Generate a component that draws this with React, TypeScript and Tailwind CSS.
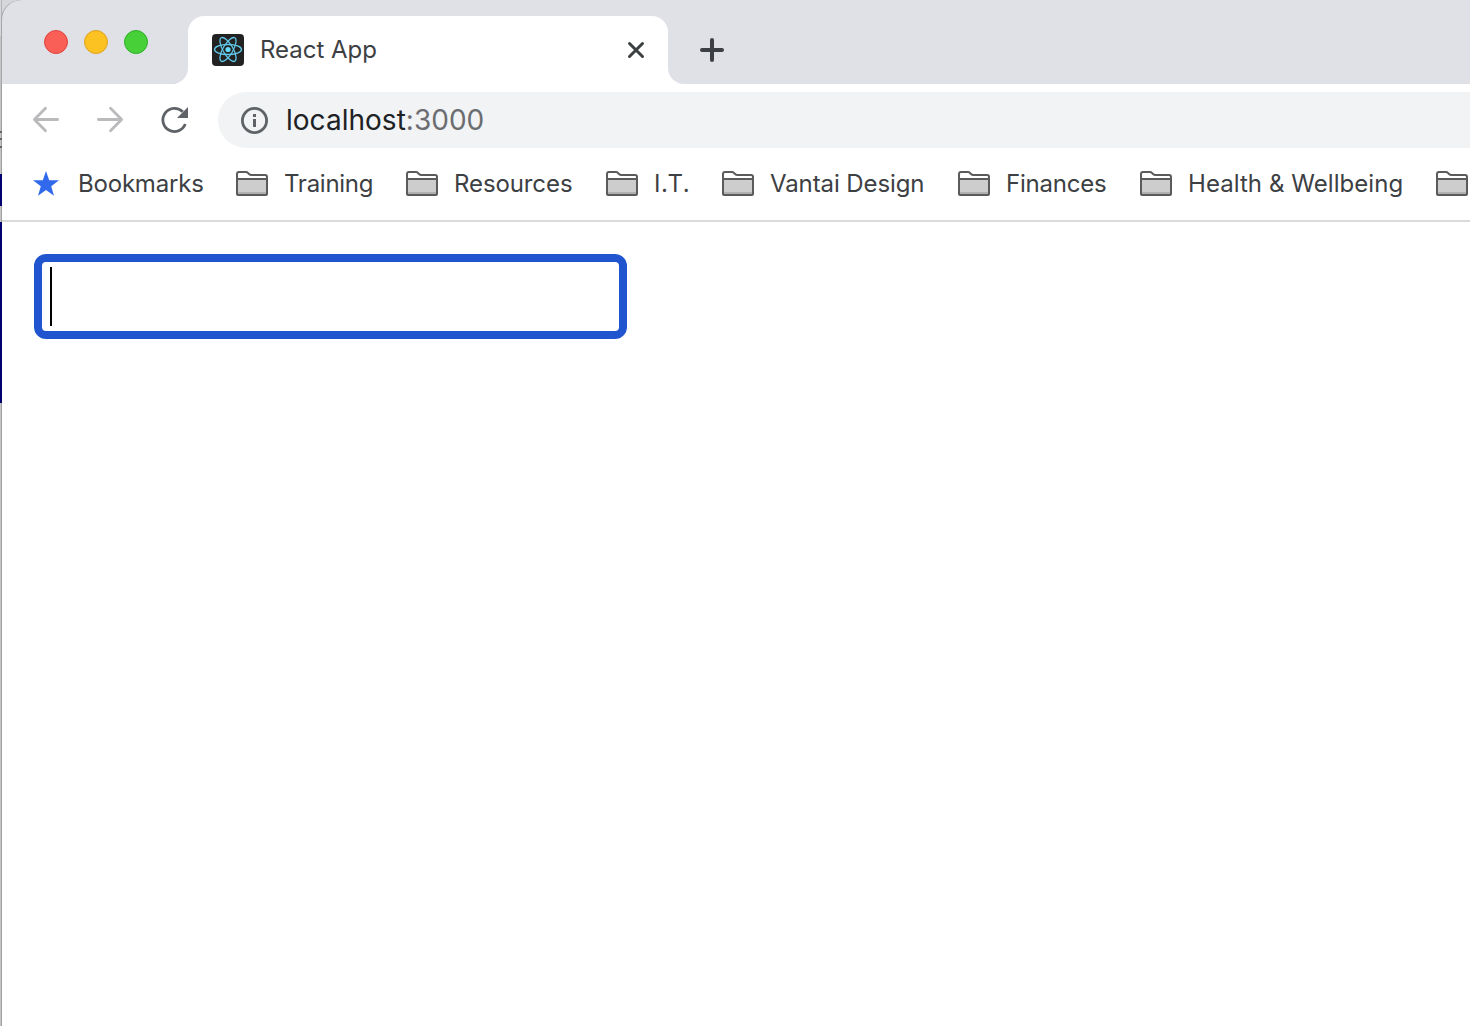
import React from "react";

const folders = [
  { label: "Training", box: "w-[170px]", text: "tracking-[-0.27px]" },
  { label: "Resources", box: "w-[200px]", text: "tracking-[-0.1px]" },
  { label: "I.T.", box: "w-[116px]", text: "tracking-[0.5px]" },
  { label: "Vantai Design", box: "w-[236px]", text: "tracking-[-0.1px]" },
  { label: "Finances", box: "w-[182px]", text: "tracking-[-0.2px]" },
  { label: "Health & Wellbeing", box: "w-[296px]", text: "tracking-[0.06px]" },
  { label: "", box: "w-8", text: "" },
];

function FolderIcon() {
  return (
    <svg width="32" height="26" viewBox="0 0 32 26" className="shrink-0">
      <path d="M1 23V3Q1 1 3 1H10Q11.2 1 12 2L13 3Q14 4 15.5 4H29Q31 4 31 6V23Q31 24 30 24H2Q1 24 1 23Z" fill="#fff" />
      <path d="M2 8H30V23H2Z" fill="#cdcdcd" />
      <path d="M2 21H30V23H2Z" fill="#b0b0b0" />
      <path d="M1 23V3Q1 1 3 1H10Q11.2 1 12 2L13 3Q14 4 15.5 4H29Q31 4 31 6V23Q31 24 30 24H2Q1 24 1 23Z M1 8H31" fill="none" stroke="#5b5b5b" strokeWidth="2" />
    </svg>
  );
}

function ReactLogo() {
  return (
    <svg width="32" height="32" viewBox="0 0 32 32" className="shrink-0">
      <rect width="32" height="32" rx="4" fill="#222" />
      <g fill="none" stroke="#61c9ea" strokeWidth="1.3">
        <ellipse cx="16" cy="15.5" rx="13.5" ry="5" />
        <ellipse cx="16" cy="15.5" rx="13.5" ry="5" transform="rotate(60 16 15.5)" />
        <ellipse cx="16" cy="15.5" rx="13.5" ry="5" transform="rotate(120 16 15.5)" />
      </g>
      <circle cx="16" cy="15.5" r="2.6" fill="#61dafb" />
    </svg>
  );
}

function BackArrow({ className = "" }: { className?: string }) {
  return (
    <svg width="28" height="28" viewBox="0 0 28 28" fill="none" stroke="#bababc" strokeWidth="2.8" strokeLinecap="round" strokeLinejoin="round" className={className}>
      <path d="M25.6 13.5H2.6M13.5 2.3L2.4 13.5L13.5 24.7" />
    </svg>
  );
}

function TabStrip() {
  return (
    <header className="flex h-[84px] bg-white">
      <div className="w-[186px] bg-[linear-gradient(to_right,#d5d7da_50%,#ffffff_50%)]">
        <div className="flex h-[84px] gap-4 rounded-br-[16px] rounded-tl-[20px] bg-[#dfe1e6] pl-[42px] pt-[30px] shadow-[-1px_0_0_#a6a7aa]">
          <span className="size-6 rounded-full border border-[#e0443e] bg-[#f95e57]" />
          <span className="size-6 rounded-full border border-[#dea123] bg-[#fbc222]" />
          <span className="size-6 rounded-full border border-[#2dae29] bg-[#48d038]" />
        </div>
      </div>
      <div className="w-[480px] bg-[#dfe1e6] pt-4">
        <div className="flex h-[68px] items-center rounded-t-[16px] bg-white pl-6 pr-[22px]">
          <ReactLogo />
          <span className="ml-4 text-[24px] leading-8 tracking-[-0.02px] text-[#3c4043]">React App</span>
          <svg width="20" height="20" viewBox="0 0 20 20" className="ml-auto" stroke="#3c4043" strokeWidth="3" strokeLinecap="round">
            <path d="M3.5 3.5L16.5 16.5M16.5 3.5L3.5 16.5" />
          </svg>
        </div>
      </div>
      <div className="flex-1 rounded-bl-[16px] bg-[#dfe1e6] pl-8 pt-[38px]">
        <svg width="24" height="24" viewBox="0 0 24 24" stroke="#3c4043" strokeWidth="4" strokeLinecap="round">
          <path d="M12 2V22M2 12H22" />
        </svg>
      </div>
    </header>
  );
}

function Toolbar() {
  return (
    <nav className="flex h-[72px] pl-[30px] pt-2">
      <BackArrow className="mt-[14px]" />
      <BackArrow className="ml-9 mt-[14px] -scale-x-100" />
      <svg width="30" height="30" viewBox="0 0 30 30" className="ml-9 mt-[13px]">
        <path d="M25.3 19.1A11.6 11.6 0 1 1 22.8 6.8" fill="none" stroke="#5f6368" strokeWidth="2.8" />
        <path d="M28 2V13H17Z" fill="#5f6368" />
      </svg>
      <div className="ml-7 flex h-14 flex-1 items-center rounded-l-full bg-[#f1f3f4] pl-[22px]">
        <svg width="28" height="28" viewBox="0 0 28 28" className="shrink-0">
          <circle cx="14.5" cy="14.5" r="12.1" fill="none" stroke="#5f6368" strokeWidth="2.8" />
          <path d="M13 8H16V11H13ZM13 13H16V21H13Z" fill="#5f6368" />
        </svg>
        <span className="ml-[18px] text-[28px] leading-9 tracking-[0.02px] text-[#202124]">
          localhost<span className="text-[#6b6d70]">:3000</span>
        </span>
      </div>
    </nav>
  );
}

function BookmarksBar() {
  return (
    <div className="flex h-[66px] overflow-hidden border-b-2 border-[#dadada] pl-[31px]">
      <div className="flex h-14 w-[203px] shrink-0 items-center">
        <svg width="26" height="26" viewBox="0 0 26 26">
          <path d="M13 0L16.2 9.3H26L18.2 15.2L21 24.7L13 19L5 24.7L7.8 15.2L0 9.3H9.8Z" fill="#3069ec" />
        </svg>
        <span className="ml-[19px] whitespace-nowrap text-[24px] leading-8 tracking-[-0.2px] text-[#3c4043]">Bookmarks</span>
      </div>
      {folders.map((f, i) => (
        <div key={i} className={"flex h-14 shrink-0 items-center " + f.box}>
          <FolderIcon />
          <span className={"ml-4 whitespace-nowrap text-[24px] leading-8 text-[#3c4043] " + f.text}>{f.label}</span>
        </div>
      ))}
    </div>
  );
}

export default function App() {
  return (
    <div className="flex h-[1026px] w-[1470px] overflow-hidden bg-[#dfe1e6] font-['Inter',sans-serif]">
      <div className="flex w-[2px] shrink-0 flex-col bg-[linear-gradient(to_right,#c4c4c4_50%,#a0a0a0_50%)]">
        <div className="h-9 bg-[linear-gradient(to_right,#d5d7da_50%,#b4b5b8_50%)]" />
        <div className="mt-[95px] h-[2px] bg-[#666]" />
        <div className="mt-[5px] h-[2px] bg-[#666]" />
        <div className="mt-[6px] h-[2px] bg-[#666]" />
        <div className="mt-[26px] h-8 bg-[#00006e]" />
        <div className="mt-4 h-[181px] bg-[#00006e]" />
      </div>
      <div className="flex min-w-0 flex-1 flex-col">
        <TabStrip />
        <div className="flex-1 bg-white">
          <Toolbar />
          <BookmarksBar />
          <main className="pl-8 pt-8">
            <div className="flex h-[85px] w-[593px] rounded-[12px] border-8 border-[#2155d0] bg-white pl-2 pt-[5px]">
              <span className="h-[59px] w-[2px] bg-black" />
            </div>
          </main>
        </div>
      </div>
    </div>
  );
}
